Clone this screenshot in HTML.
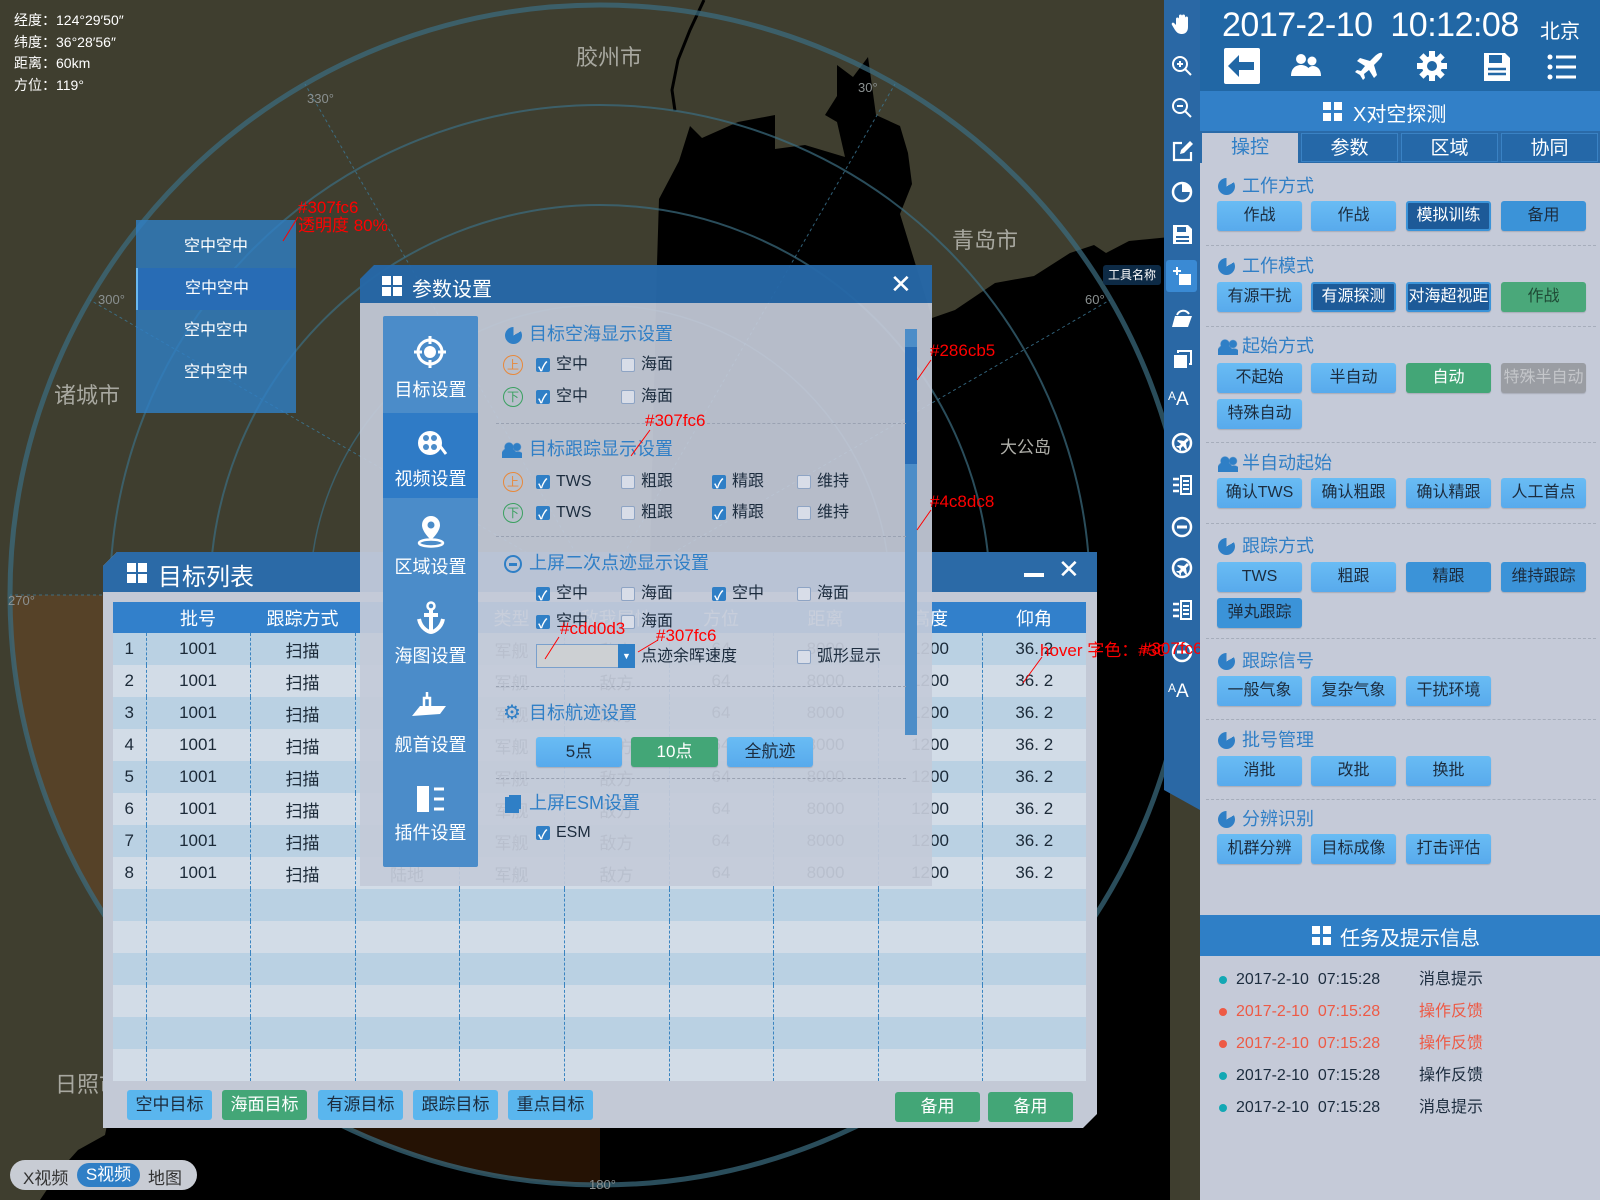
<!DOCTYPE html>
<html><head><meta charset="utf-8"><style>
*{margin:0;padding:0;box-sizing:border-box}
body{width:1600px;height:1200px;overflow:hidden;position:relative;background:#3f3e2f;font-family:"Liberation Sans","Noto Sans CJK SC",sans-serif;}
.a{position:absolute}
.info{left:14px;color:#fff;font-size:14px;line-height:14px}
.city{color:#a8a8a0;font-size:22px}
.deg{color:#8a9090;font-size:13px}
.rp{left:1200px;top:0;width:400px;height:1200px;background:#c5cad8}
.st{color:#307fc6;font-size:18px;left:1218px;height:22px;line-height:22px;padding-left:24px}
.pie:before{content:"";position:absolute;left:0;top:3px;width:17px;height:17px;border-radius:50%;background:conic-gradient(transparent 0 60deg,#2f7fc6 60deg 360deg)}
.ppl:before{content:"";position:absolute;left:0;top:4px;width:20px;height:16px;background:radial-gradient(circle at 7px 5px,#2f7fc6 4px,transparent 5px),radial-gradient(ellipse at 7px 16px,#2f7fc6 8px,transparent 9px),radial-gradient(circle at 15px 5px,#2f7fc6 3.5px,transparent 4.5px),radial-gradient(ellipse at 16px 16px,#2f7fc6 6px,transparent 7px)}
.sep{left:1206px;width:390px;border-top:1px dashed #a6adbb;height:0}
.b{position:absolute;width:85px;height:30px;line-height:30px;text-align:center;font-size:16px;color:#1c2c3e;background:linear-gradient(#69bcf4,#58aaec);border-radius:3px;box-shadow:0 1px 1px rgba(0,0,0,.15)}
.b.d{background:#1d5a98;color:#fff;border:2px solid #3b93d8;line-height:26px}
.b.g{background:#43a677;color:#fff}
.b.g2{background:#4aa87a;color:#1f4a35}
.b.m{background:#3b93d8;color:#1c2c3e}
.b.x{background:#9a9da3;color:#c4c6ca}
.ti{position:absolute;left:1171px}
.cb{position:absolute;width:14px;height:14px;border:1px solid #8ea4c4;background:#d8dde8;border-radius:2px}
.cb.c{background:#2f7fc6;border-color:#2f7fc6}
.cb.c:after{content:"✓";position:absolute;left:1px;top:-3px;color:#fff;font-size:13px;font-weight:bold}
.lbl{position:absolute;font-size:16px;color:#1c2c3e;line-height:18px}
.circ{position:absolute;width:20px;height:20px;border-radius:50%;font-size:12px;line-height:18px;text-align:center}
.dt{font-size:18px;color:#307fc6;line-height:22px;padding-left:24px}
.nav{color:#fff;font-size:18px;width:95px;text-align:center;left:383px}
.red{color:#f00;font-size:17px;line-height:18px}
table{border-collapse:collapse;table-layout:fixed}
td{height:32px;font-size:17px;color:#1c2a38;text-align:center;border-left:1px dashed #3a84c0}
td:first-child{border-left:none}
tr:nth-child(odd) td{background:#d2dce7}
tr:nth-child(even) td{background:#bad1e3}
th{height:31px;background:#3280cb;color:#fff;font-size:18px;font-weight:normal}
.lb{position:absolute;top:1090px;width:85px;height:30px;line-height:30px;text-align:center;font-size:17px;color:#1c2c3e;background:#5ab6ee;border-radius:3px}
.msg{left:1236px;font-size:16px;color:#1c2c3e;line-height:18px}
.msg b{font-weight:normal;position:absolute;left:183px;white-space:nowrap}
.dot{position:absolute;left:-17px;top:5px;width:8px;height:8px;border-radius:50%;background:#13a8b4}
.r{color:#ee5a45}.r .dot{background:#ee5a45}
</style></head><body>

<!-- map -->
<svg class="a" style="left:0;top:0" width="1200" height="1200">
<polygon fill="#000" points="675,111 702,138 738,122 775,115 775,149 805,145 845,157 837,122 825,115 837,96 837,65 853,77 868,57 876,115 900,126 908,153 912,184 900,214 932,318 955,310 995,283 1034,276 1070,253 1094,245 1106,253 1129,241 1170,237 1170,1200 40,1200 60,1170 78,1150 105,1135 110,1110 110,560 650,560 657,264 659,199 679,161 690,126"/>
<polyline fill="none" stroke="#000" stroke-width="3" points="704,0 690,30 678,60 672,90 675,111"/>
<path d="M600,595 L10,595 A590,590 0 0 0 600,1185 Z" fill="rgba(170,80,20,0.22)"/>
<g fill="none" stroke="rgba(60,110,130,0.7)">
<circle cx="600" cy="595" r="590" stroke-width="5"/>
<circle cx="600" cy="595" r="490" stroke-width="2"/>
<circle cx="600" cy="595" r="390" stroke-width="2"/>
<circle cx="600" cy="595" r="290" stroke-width="1.5"/>
</g>
<g stroke="rgba(60,120,150,0.8)" stroke-dasharray="3,3" stroke-width="1">
<line x1="600" y1="595" x2="305" y2="84"/>
<line x1="600" y1="595" x2="90" y2="300"/>
<line x1="600" y1="595" x2="895" y2="84"/>
<line x1="600" y1="595" x2="1110" y2="300"/>
<line x1="600" y1="595" x2="10" y2="595"/>
</g>
</svg>
<div class="a info" style="top:13px">经度：124°29′50″</div>
<div class="a info" style="top:35px">纬度：36°28′56″</div>
<div class="a info" style="top:56px">距离：60km</div>
<div class="a info" style="top:78px">方位：119°</div>
<div class="a city" style="left:576px;top:40px">胶州市</div>
<div class="a city" style="left:952px;top:223px">青岛市</div>
<div class="a city" style="left:54px;top:378px">诸城市</div>
<div class="a city" style="left:55px;top:1067px">日照市</div>
<div class="a" style="left:1000px;top:433px;color:#b0b0aa;font-size:17px">大公岛</div>
<div class="a deg" style="left:307px;top:91px">330°</div>
<div class="a deg" style="left:98px;top:292px">300°</div>
<div class="a deg" style="left:858px;top:80px">30°</div>
<div class="a deg" style="left:1085px;top:292px">60°</div>
<div class="a deg" style="left:8px;top:593px">270°</div>
<div class="a deg" style="left:589px;top:1177px">180°</div>

<!-- popup list -->
<div class="a" style="left:136px;top:220px;width:160px;height:193px;background:rgba(48,127,198,0.8)">
<div style="height:42px;line-height:42px;margin-top:6px;text-align:center;color:#fff;font-size:16px">空中空中</div>
<div style="height:42px;line-height:42px;text-align:center;color:#fff;font-size:16px;background:#286cb5;border-left:2px solid #6ab8f0">空中空中</div>
<div style="height:42px;line-height:42px;text-align:center;color:#fff;font-size:16px">空中空中</div>
<div style="height:42px;line-height:42px;text-align:center;color:#fff;font-size:16px">空中空中</div>
</div>
<div class="a red" style="left:298px;top:199px">#307fc6<br>透明度 80%</div>
<svg class="a" style="left:280px;top:215px" width="20" height="30"><line x1="18" y1="2" x2="3" y2="26" stroke="#f00"/></svg>

<!-- target list window -->
<div class="a" style="left:103px;top:552px;width:994px;height:576px;background:#c3c9d6;clip-path:polygon(14px 0,100% 0,100% calc(100% - 14px),calc(100% - 14px) 100%,0 100%,0 14px)">
<div style="height:40px;background:#2b6aa7"></div>
</div>
<div class="a" style="left:127px;top:563px;width:20px;height:20px;background:linear-gradient(#fff,#fff) 0 0/9px 9px no-repeat,linear-gradient(#fff,#fff) 11px 0/9px 9px no-repeat,linear-gradient(#fff,#fff) 0 11px/9px 9px no-repeat,linear-gradient(#fff,#fff) 11px 11px/9px 9px no-repeat"></div>
<div class="a" style="left:158px;top:557px;color:#fff;font-size:24px">目标列表</div>
<div class="a" style="left:1024px;top:573px;width:20px;height:4px;background:#fff"></div>
<div class="a" style="left:1058px;top:556px;color:#fff;font-size:26px;line-height:26px">✕</div>
<table class="a" style="left:113px;top:602px;width:973px">
<colgroup><col style="width:33px"><col style="width:104px"><col style="width:105px"><col style="width:104px"><col style="width:105px"><col style="width:105px"><col style="width:104px"><col style="width:105px"><col style="width:104px"><col style="width:104px"></colgroup>
<tr><th></th><th>批号</th><th>跟踪方式</th><th>航迹</th><th>类型</th><th>敌我属性</th><th>方位</th><th>距离</th><th>高度</th><th>仰角</th></tr>
<tr><td>1</td><td>1001</td><td>扫描</td><td>陆地</td><td>军舰</td><td>敌方</td><td>64</td><td>8000</td><td>1200</td><td>36. 2</td></tr>
<tr><td>2</td><td>1001</td><td>扫描</td><td>陆地</td><td>军舰</td><td>敌方</td><td>64</td><td>8000</td><td>1200</td><td>36. 2</td></tr>
<tr><td>3</td><td>1001</td><td>扫描</td><td>陆地</td><td>军舰</td><td>敌方</td><td>64</td><td>8000</td><td>1200</td><td>36. 2</td></tr>
<tr><td>4</td><td>1001</td><td>扫描</td><td>陆地</td><td>军舰</td><td>敌方</td><td>64</td><td>8000</td><td>1200</td><td>36. 2</td></tr>
<tr><td>5</td><td>1001</td><td>扫描</td><td>陆地</td><td>军舰</td><td>敌方</td><td>64</td><td>8000</td><td>1200</td><td>36. 2</td></tr>
<tr><td>6</td><td>1001</td><td>扫描</td><td>陆地</td><td>军舰</td><td>敌方</td><td>64</td><td>8000</td><td>1200</td><td>36. 2</td></tr>
<tr><td>7</td><td>1001</td><td>扫描</td><td>陆地</td><td>军舰</td><td>敌方</td><td>64</td><td>8000</td><td>1200</td><td>36. 2</td></tr>
<tr><td>8</td><td>1001</td><td>扫描</td><td>陆地</td><td>军舰</td><td>敌方</td><td>64</td><td>8000</td><td>1200</td><td>36. 2</td></tr>
<tr><td></td><td></td><td></td><td></td><td></td><td></td><td></td><td></td><td></td><td></td></tr>
<tr><td></td><td></td><td></td><td></td><td></td><td></td><td></td><td></td><td></td><td></td></tr>
<tr><td></td><td></td><td></td><td></td><td></td><td></td><td></td><td></td><td></td><td></td></tr>
<tr><td></td><td></td><td></td><td></td><td></td><td></td><td></td><td></td><td></td><td></td></tr>
<tr><td></td><td></td><td></td><td></td><td></td><td></td><td></td><td></td><td></td><td></td></tr>
<tr><td></td><td></td><td></td><td></td><td></td><td></td><td></td><td></td><td></td><td></td></tr>
</table>
<div class="lb" style="left:127px">空中目标</div>
<div class="lb" style="left:222px;background:#43a677;color:#fff">海面目标</div>
<div class="lb" style="left:318px">有源目标</div>
<div class="lb" style="left:413px">跟踪目标</div>
<div class="lb" style="left:508px">重点目标</div>
<div class="lb" style="left:895px;top:1092px;background:#43a677;color:#fff">备用</div>
<div class="lb" style="left:988px;top:1092px;background:#43a677;color:#fff">备用</div>
<div class="a red" style="left:1040px;top:642px">hover 字色：#307fc6</div>
<svg class="a" style="left:1020px;top:655px" width="25" height="30"><line x1="22" y1="2" x2="3" y2="28" stroke="#f00"/></svg>

<!-- param dialog -->
<div class="a" style="left:360px;top:265px;width:572px;height:621px;clip-path:polygon(14px 0,100% 0,100% 100%,0 100%,0 14px)">
<div style="height:38px;background:rgba(38,104,168,0.96)"></div>
<div style="height:583px;background:rgba(196,202,216,0.93)"></div>
</div>
<div class="a" style="left:382px;top:276px;width:20px;height:20px;background:linear-gradient(#fff,#fff) 0 0/9px 9px no-repeat,linear-gradient(#fff,#fff) 11px 0/9px 9px no-repeat,linear-gradient(#fff,#fff) 0 11px/9px 9px no-repeat,linear-gradient(#fff,#fff) 11px 11px/9px 9px no-repeat"></div>
<div class="a" style="left:412px;top:273px;color:#fff;font-size:20px">参数设置</div>
<div class="a" style="left:890px;top:271px;color:#fff;font-size:26px;line-height:26px">✕</div>
<div class="a" style="left:383px;top:316px;width:95px;height:551px;background:#4b8cc9;border-radius:2px"></div>
<div class="a" style="left:383px;top:413px;width:95px;height:85px;background:#2f7bc6"></div>
<svg class="a" style="left:412px;top:334px" width="36" height="36"><circle cx="18" cy="18" r="12" fill="none" stroke="#fff" stroke-width="3"/><circle cx="18" cy="18" r="6" fill="#fff"/><path d="M18 2v8M18 26v8M2 18h8M26 18h8" stroke="#fff" stroke-width="3"/></svg>
<svg class="a" style="left:414px;top:428px" width="34" height="30"><circle cx="16" cy="15" r="12" fill="#fff"/><circle cx="12" cy="10" r="3" fill="#4b8cc9"/><circle cx="20" cy="10" r="3" fill="#4b8cc9"/><circle cx="12" cy="19" r="3" fill="#4b8cc9"/><circle cx="20" cy="19" r="3" fill="#4b8cc9"/><path d="M26 18l6 8" stroke="#fff" stroke-width="3"/></svg>
<svg class="a" style="left:416px;top:514px" width="30" height="34"><path d="M15 2a9 9 0 0 1 9 9c0 7-9 15-9 15s-9-8-9-15a9 9 0 0 1 9-9z" fill="#fff"/><circle cx="15" cy="11" r="3.5" fill="#4b8cc9"/><ellipse cx="15" cy="29" rx="12" ry="3.5" fill="none" stroke="#fff" stroke-width="2.5"/></svg>
<svg class="a" style="left:416px;top:601px" width="30" height="34"><circle cx="15" cy="5" r="3.5" fill="none" stroke="#fff" stroke-width="2.5"/><path d="M15 8v22M8 14h14M3 18c2 10 10 13 12 13s10-3 12-13" fill="none" stroke="#fff" stroke-width="4"/></svg>
<svg class="a" style="left:410px;top:690px" width="40" height="32"><path d="M2 26l8-10h26l-6 8z" fill="#fff"/><path d="M14 16v-8h6v8M17 8v-6" stroke="#fff" stroke-width="2.5" fill="none"/></svg>
<svg class="a" style="left:416px;top:784px" width="34" height="30"><rect x="1" y="2" width="12" height="26" fill="#fff"/><path d="M18 5h10M18 15h10M18 25h10" stroke="#fff" stroke-width="3"/></svg>
<div class="a nav" style="top:376px">目标设置</div>
<div class="a nav" style="top:465px">视频设置</div>
<div class="a nav" style="top:553px">区域设置</div>
<div class="a nav" style="top:642px">海图设置</div>
<div class="a nav" style="top:731px">舰首设置</div>
<div class="a nav" style="top:819px">插件设置</div>

<div class="a" style="left:905px;top:329px;width:12px;height:406px;background:#4c8dc8"></div>
<div class="a" style="left:905px;top:347px;width:12px;height:117px;background:#286cb5"></div>

<div class="a dt" style="left:505px;top:323px">目标空海显示设置</div>
<div class="a" style="left:505px;top:327px;width:17px;height:17px;border-radius:50%;background:conic-gradient(transparent 0 60deg,#2f7fc6 60deg 360deg)"></div>
<div class="circ" style="left:503px;top:355px;border:1px solid #e8883a;color:#e8883a">上</div>
<div class="cb c" style="left:536px;top:358px"></div><div class="lbl" style="left:556px;top:356px">空中</div>
<div class="cb" style="left:621px;top:358px"></div><div class="lbl" style="left:641px;top:356px">海面</div>
<div class="circ" style="left:503px;top:387px;border:1px solid #3aa060;color:#3aa060">下</div>
<div class="cb c" style="left:536px;top:390px"></div><div class="lbl" style="left:556px;top:388px">空中</div>
<div class="cb" style="left:621px;top:390px"></div><div class="lbl" style="left:641px;top:388px">海面</div>
<div class="a" style="left:496px;top:423px;width:410px;border-top:1px dashed #9aa2b2"></div>

<div class="a dt" style="left:505px;top:438px">目标跟踪显示设置</div>
<div class="a" style="left:502px;top:442px;width:20px;height:16px;background:radial-gradient(circle at 7px 5px,#2f7fc6 4px,transparent 5px),radial-gradient(ellipse at 7px 16px,#2f7fc6 8px,transparent 9px),radial-gradient(circle at 15px 5px,#2f7fc6 3.5px,transparent 4.5px),radial-gradient(ellipse at 16px 16px,#2f7fc6 6px,transparent 7px)"></div>
<div class="circ" style="left:503px;top:472px;border:1px solid #e8883a;color:#e8883a">上</div>
<div class="cb c" style="left:536px;top:475px"></div><div class="lbl" style="left:556px;top:473px">TWS</div>
<div class="cb" style="left:621px;top:475px"></div><div class="lbl" style="left:641px;top:473px">粗跟</div>
<div class="cb c" style="left:712px;top:475px"></div><div class="lbl" style="left:732px;top:473px">精跟</div>
<div class="cb" style="left:797px;top:475px"></div><div class="lbl" style="left:817px;top:473px">维持</div>
<div class="circ" style="left:503px;top:503px;border:1px solid #3aa060;color:#3aa060">下</div>
<div class="cb c" style="left:536px;top:506px"></div><div class="lbl" style="left:556px;top:504px">TWS</div>
<div class="cb" style="left:621px;top:506px"></div><div class="lbl" style="left:641px;top:504px">粗跟</div>
<div class="cb c" style="left:712px;top:506px"></div><div class="lbl" style="left:732px;top:504px">精跟</div>
<div class="cb" style="left:797px;top:506px"></div><div class="lbl" style="left:817px;top:504px">维持</div>
<div class="a" style="left:496px;top:536px;width:410px;border-top:1px dashed #9aa2b2"></div>

<div class="a dt" style="left:505px;top:552px">上屏二次点迹显示设置</div>
<div class="a" style="left:504px;top:555px;width:18px;height:18px;border-radius:50%;border:2px solid #2f7fc6;background:linear-gradient(#2f7fc6,#2f7fc6) center/8px 3px no-repeat"></div>
<div class="cb c" style="left:536px;top:587px"></div><div class="lbl" style="left:556px;top:585px">空中</div>
<div class="cb" style="left:621px;top:587px"></div><div class="lbl" style="left:641px;top:585px">海面</div>
<div class="cb c" style="left:712px;top:587px"></div><div class="lbl" style="left:732px;top:585px">空中</div>
<div class="cb" style="left:797px;top:587px"></div><div class="lbl" style="left:817px;top:585px">海面</div>
<div class="cb c" style="left:536px;top:615px"></div><div class="lbl" style="left:556px;top:613px">空中</div>
<div class="cb" style="left:621px;top:615px"></div><div class="lbl" style="left:641px;top:613px">海面</div>
<div class="a" style="left:536px;top:644px;width:99px;height:24px;background:#cdd0d3;border:1px solid #7aa0cc"></div>
<div class="a" style="left:618px;top:644px;width:17px;height:24px;background:#2f7fc6;color:#fff;font-size:9px;text-align:center;line-height:24px">▼</div>
<div class="lbl" style="left:641px;top:648px">点迹余晖速度</div>
<div class="cb" style="left:797px;top:650px"></div><div class="lbl" style="left:817px;top:648px">弧形显示</div>
<div class="a" style="left:496px;top:686px;width:410px;border-top:1px dashed #9aa2b2"></div>

<div class="a dt" style="left:505px;top:702px">目标航迹设置</div>
<div class="a" style="left:503px;top:703px;color:#2f7fc6;font-size:20px;line-height:20px">⚙</div>
<div class="b" style="left:536px;top:737px;width:86px;font-size:17px">5点</div>
<div class="b g" style="left:631px;top:737px;width:87px;font-size:17px">10点</div>
<div class="b" style="left:727px;top:737px;width:86px;font-size:17px">全航迹</div>
<div class="a" style="left:496px;top:778px;width:410px;border-top:1px dashed #9aa2b2"></div>

<div class="a dt" style="left:505px;top:792px">上屏ESM设置</div>
<div class="a" style="left:505px;top:797px;width:14px;height:16px;background:#2f7fc6;box-shadow:3px -3px 0 -1px #2f7fc6"></div>
<div class="cb c" style="left:536px;top:826px"></div><div class="lbl" style="left:556px;top:824px">ESM</div>

<div class="a red" style="left:645px;top:412px">#307fc6</div>
<svg class="a" style="left:628px;top:428px" width="25" height="30"><line x1="22" y1="2" x2="3" y2="28" stroke="#f00"/></svg>
<div class="a red" style="left:930px;top:342px">#286cb5</div>
<svg class="a" style="left:914px;top:358px" width="20" height="24"><line x1="17" y1="2" x2="3" y2="22" stroke="#f00"/></svg>
<div class="a red" style="left:930px;top:493px">#4c8dc8</div>
<svg class="a" style="left:914px;top:508px" width="20" height="24"><line x1="17" y1="2" x2="3" y2="22" stroke="#f00"/></svg>
<div class="a red" style="left:560px;top:620px">#cdd0d3</div>
<svg class="a" style="left:542px;top:635px" width="20" height="26"><line x1="17" y1="2" x2="3" y2="24" stroke="#f00"/></svg>
<div class="a red" style="left:656px;top:627px">#307fc6</div>
<svg class="a" style="left:636px;top:638px" width="24" height="18"><line x1="22" y1="2" x2="2" y2="14" stroke="#f00"/></svg>

<!-- toolbar strip -->
<div class="a" style="left:1164px;top:0;width:36px;height:810px;background:#2a68a5;clip-path:polygon(0 0,100% 0,100% 100%,0 790px)"></div>
<div class="a" style="left:1166px;top:260px;width:31px;height:32px;background:#3a8ad4;border-radius:3px"></div>
<div class="a" style="left:1103px;top:265px;width:58px;height:20px;background:#0d2a45;border-radius:3px;color:#fff;font-size:12px;line-height:20px;text-align:center">工具名称</div>
<svg class="ti" style="top:13px" width="22" height="22"><path d="M5 12V6a1.5 1.5 0 0 1 3 0v5V3a1.5 1.5 0 0 1 3 0v8V3a1.5 1.5 0 0 1 3 0v8V5a1.5 1.5 0 0 1 3 0v9c0 5-3 7-6 7s-5-1-7-4l-3-5c-1-2 1-3 2-2z" fill="#fff"/></svg>
<svg class="ti" style="top:55px" width="22" height="22" fill="none" stroke="#fff" stroke-width="2"><circle cx="9" cy="9" r="7"/><path d="M14 14l6 6M6 9h6M9 6v6"/></svg>
<svg class="ti" style="top:97px" width="22" height="22" fill="none" stroke="#fff" stroke-width="2"><circle cx="9" cy="9" r="7"/><path d="M14 14l6 6M6 9h6"/></svg>
<svg class="ti" style="top:140px" width="22" height="22" fill="none" stroke="#fff" stroke-width="2.2"><path d="M11 3H3v17h17v-8"/><path d="M9 14l1-4 9-9 3 3-9 9z" fill="#fff" stroke="none"/></svg>
<svg class="ti" style="top:181px" width="22" height="22"><circle cx="11" cy="11" r="9" fill="none" stroke="#fff" stroke-width="2.5"/><path d="M11 11V2a9 9 0 0 1 9 9z" fill="#fff"/></svg>
<svg class="ti" style="top:223px" width="22" height="22"><path d="M2 2h15l4 4v15H2z" fill="#fff"/><rect x="6" y="4" width="9" height="5" fill="#2a68a5"/><path d="M5 14h13M5 18h13" stroke="#2a68a5" stroke-width="2"/></svg>
<svg class="ti" style="top:265px" width="22" height="22"><path d="M2 6h8M6 2v8" stroke="#fff" stroke-width="2"/><rect x="8" y="9" width="12" height="11" fill="#fff"/></svg>
<svg class="ti" style="top:307px" width="22" height="22"><path d="M1 20l3-11h17l-4 11z" fill="#fff"/><path d="M6 8c2-5 9-6 12-1" fill="none" stroke="#fff" stroke-width="2"/></svg>
<svg class="ti" style="top:348px" width="22" height="22"><rect x="3" y="7" width="13" height="13" fill="#fff"/><path d="M7 5V3h13v13h-2" fill="none" stroke="#fff" stroke-width="2"/></svg>
<div class="a" style="left:1168px;top:389px;color:#fff;font-size:19px"><span style="font-size:12px;vertical-align:5px">A</span>A</div>
<svg class="ti" style="top:432px" width="22" height="22"><circle cx="11" cy="11" r="9" fill="none" stroke="#fff" stroke-width="2.5"/><path d="M16 6l-3 3-6-1-1 1 4 3-2 2-2 0-1 1 3 1 1 3 1-1v-2l2-2 3 4 1-1-1-6 3-3z" fill="#fff"/></svg>
<svg class="ti" style="top:474px" width="22" height="22"><path d="M2 5h6M2 11h6M2 17h6" stroke="#fff" stroke-width="2.5"/><rect x="10" y="2" width="10" height="18" fill="none" stroke="#fff" stroke-width="2"/><path d="M12 7h6M12 11h6M12 15h6" stroke="#fff" stroke-width="2"/></svg>
<svg class="ti" style="top:516px" width="22" height="22"><circle cx="11" cy="11" r="9" fill="none" stroke="#fff" stroke-width="2.5"/><path d="M6 11h10" stroke="#fff" stroke-width="3"/></svg>
<svg class="ti" style="top:557px" width="22" height="22"><circle cx="11" cy="11" r="9" fill="none" stroke="#fff" stroke-width="2.5"/><path d="M16 6l-3 3-6-1-1 1 4 3-2 2-2 0-1 1 3 1 1 3 1-1v-2l2-2 3 4 1-1-1-6 3-3z" fill="#fff"/></svg>
<svg class="ti" style="top:599px" width="22" height="22"><path d="M2 5h6M2 11h6M2 17h6" stroke="#fff" stroke-width="2.5"/><rect x="10" y="2" width="10" height="18" fill="none" stroke="#fff" stroke-width="2"/><path d="M12 7h6M12 11h6M12 15h6" stroke="#fff" stroke-width="2"/></svg>
<svg class="ti" style="top:641px" width="22" height="22"><circle cx="11" cy="11" r="9" fill="none" stroke="#fff" stroke-width="2.5"/><path d="M6 11h10" stroke="#fff" stroke-width="3"/></svg>
<div class="a" style="left:1168px;top:681px;color:#fff;font-size:19px"><span style="font-size:12px;vertical-align:5px">A</span>A</div>
<div class="a red" style="left:1142px;top:640px">#307fc6</div>

<!-- right panel -->
<div class="a rp"></div>
<div class="a" style="left:1200px;top:0;width:400px;height:91px;background:#2167a5"></div>
<div class="a" style="left:1222px;top:6px;color:#fff;font-size:34px;white-space:nowrap;letter-spacing:-0.5px">2017-2-10&nbsp;&nbsp;10:12:08</div>
<div class="a" style="left:1540px;top:15px;color:#fff;font-size:20px">北京</div>
<div class="a" style="left:1224px;top:48px;width:36px;height:36px;background:#fff;border-radius:2px"></div>
<svg class="a" style="left:1224px;top:48px" width="36" height="36"><path d="M4 18l11-11v7h15v8h-15v7z" fill="#2167a5"/></svg>
<svg class="a" style="left:1290px;top:52px" width="32" height="28"><circle cx="11" cy="7" r="5" fill="#fff"/><circle cx="22" cy="9" r="4.5" fill="#fff"/><path d="M1 24c0-8 5-11 10-11s10 3 10 11z" fill="#fff"/><path d="M16 24c0-7 3-10 7-10s8 3 8 10z" fill="#fff"/></svg>
<svg class="a" style="left:1354px;top:50px" width="32" height="32"><path d="M28 3c-2-1-5 1-8 4l-4 4-10-3-3 3 8 5-4 5-4-1-2 2 5 3 3 5 2-2-1-4 5-4 5 8 3-3-3-10 4-4c3-3 5-6 4-8z" fill="#fff"/></svg>
<svg class="a" style="left:1416px;top:50px" width="32" height="32"><g fill="#fff"><circle cx="16" cy="16" r="10"/><rect x="13" y="1" width="6" height="30"/><rect x="1" y="13" width="30" height="6"/><rect x="13" y="1" width="6" height="30" transform="rotate(45 16 16)"/><rect x="13" y="1" width="6" height="30" transform="rotate(-45 16 16)"/></g><circle cx="16" cy="16" r="5" fill="#2167a5"/></svg>
<svg class="a" style="left:1483px;top:52px" width="28" height="30"><path d="M1 1h21l5 5v23h-26z" fill="#fff"/><rect x="6" y="3" width="13" height="8" fill="#2167a5"/><path d="M5 17h18M5 22h18" stroke="#2167a5" stroke-width="2.5"/></svg>
<svg class="a" style="left:1547px;top:54px" width="30" height="26"><path d="M9 3h20M9 13h20M9 23h20" stroke="#fff" stroke-width="3"/><circle cx="3" cy="3" r="2.5" fill="#fff"/><circle cx="3" cy="13" r="2.5" fill="#fff"/><circle cx="3" cy="23" r="2.5" fill="#fff"/></svg>

<div class="a" style="left:1200px;top:91px;width:400px;height:40px;background:#3280c8"></div>
<div class="a" style="left:1323px;top:102px;width:19px;height:19px;background:linear-gradient(#fff,#fff) 0 0/8px 8px no-repeat,linear-gradient(#fff,#fff) 11px 0/8px 8px no-repeat,linear-gradient(#fff,#fff) 0 11px/8px 8px no-repeat,linear-gradient(#fff,#fff) 11px 11px/8px 8px no-repeat"></div>
<div class="a" style="left:1353px;top:98px;color:#fff;font-size:20px">X对空探测</div>
<div class="a" style="left:1200px;top:131px;width:400px;height:32px;background:#2a6aa8"></div>
<div class="a" style="left:1202px;top:133px;width:96px;height:30px;background:#c5cad8;color:#307fc6;font-size:19px;text-align:center;line-height:30px">操控</div>
<div class="a" style="left:1301px;top:133px;width:97px;height:29px;background:#2568a8;color:#fff;font-size:19px;text-align:center;line-height:29px;border:1px solid #3a82c4">参数</div>
<div class="a" style="left:1401px;top:133px;width:97px;height:29px;background:#2568a8;color:#fff;font-size:19px;text-align:center;line-height:29px;border:1px solid #3a82c4">区域</div>
<div class="a" style="left:1501px;top:133px;width:97px;height:29px;background:#2568a8;color:#fff;font-size:19px;text-align:center;line-height:29px;border:1px solid #3a82c4">协同</div>

<div class="a st pie" style="top:175px">工作方式</div>
<div class="b" style="left:1217px;top:201px">作战</div><div class="b" style="left:1311px;top:201px">作战</div><div class="b d" style="left:1406px;top:201px">模拟训练</div><div class="b m" style="left:1501px;top:201px">备用</div>
<div class="a sep" style="top:245px"></div>
<div class="a st pie" style="top:255px">工作模式</div>
<div class="b" style="left:1217px;top:282px">有源干扰</div><div class="b d" style="left:1311px;top:282px">有源探测</div><div class="b d" style="left:1406px;top:282px">对海超视距</div><div class="b g2" style="left:1501px;top:282px">作战</div>
<div class="a sep" style="top:326px"></div>
<div class="a st ppl" style="top:335px">起始方式</div>
<div class="b" style="left:1217px;top:363px">不起始</div><div class="b" style="left:1311px;top:363px">半自动</div><div class="b g" style="left:1406px;top:363px">自动</div><div class="b x" style="left:1501px;top:363px">特殊半自动</div>
<div class="b" style="left:1217px;top:399px">特殊自动</div>
<div class="a sep" style="top:442px"></div>
<div class="a st ppl" style="top:452px">半自动起始</div>
<div class="b" style="left:1217px;top:478px">确认TWS</div><div class="b" style="left:1311px;top:478px">确认粗跟</div><div class="b" style="left:1406px;top:478px">确认精跟</div><div class="b" style="left:1501px;top:478px">人工首点</div>
<div class="a sep" style="top:523px"></div>
<div class="a st pie" style="top:535px">跟踪方式</div>
<div class="b" style="left:1217px;top:562px">TWS</div><div class="b" style="left:1311px;top:562px">粗跟</div><div class="b m" style="left:1406px;top:562px">精跟</div><div class="b m" style="left:1501px;top:562px">维持跟踪</div>
<div class="b m" style="left:1217px;top:598px">弹丸跟踪</div>
<div class="a sep" style="top:638px"></div>
<div class="a st pie" style="top:650px">跟踪信号</div>
<div class="b" style="left:1217px;top:676px">一般气象</div><div class="b" style="left:1311px;top:676px">复杂气象</div><div class="b" style="left:1406px;top:676px">干扰环境</div>
<div class="a sep" style="top:719px"></div>
<div class="a st pie" style="top:729px">批号管理</div>
<div class="b" style="left:1217px;top:756px">消批</div><div class="b" style="left:1311px;top:756px">改批</div><div class="b" style="left:1406px;top:756px">换批</div>
<div class="a sep" style="top:799px"></div>
<div class="a st pie" style="top:808px">分辨识别</div>
<div class="b" style="left:1217px;top:834px">机群分辨</div><div class="b" style="left:1311px;top:834px">目标成像</div><div class="b" style="left:1406px;top:834px">打击评估</div>

<div class="a" style="left:1200px;top:915px;width:400px;height:41px;background:#2f7fc6"></div>
<div class="a" style="left:1312px;top:926px;width:19px;height:19px;background:linear-gradient(#fff,#fff) 0 0/8px 8px no-repeat,linear-gradient(#fff,#fff) 11px 0/8px 8px no-repeat,linear-gradient(#fff,#fff) 0 11px/8px 8px no-repeat,linear-gradient(#fff,#fff) 11px 11px/8px 8px no-repeat"></div>
<div class="a" style="left:1340px;top:922px;color:#fff;font-size:20px">任务及提示信息</div>
<div class="a msg" style="top:971px"><span class="dot"></span>2017-2-10&nbsp;&nbsp;07:15:28<b>消息提示</b></div>
<div class="a msg r" style="top:1003px"><span class="dot"></span>2017-2-10&nbsp;&nbsp;07:15:28<b>操作反馈</b></div>
<div class="a msg r" style="top:1035px"><span class="dot"></span>2017-2-10&nbsp;&nbsp;07:15:28<b>操作反馈</b></div>
<div class="a msg" style="top:1067px"><span class="dot"></span>2017-2-10&nbsp;&nbsp;07:15:28<b>操作反馈</b></div>
<div class="a msg" style="top:1099px"><span class="dot"></span>2017-2-10&nbsp;&nbsp;07:15:28<b>消息提示</b></div>

<!-- bottom pill -->
<div class="a" style="left:10px;top:1160px;width:187px;height:30px;background:#c8ccd4;border-radius:15px"></div>
<div class="a" style="left:23px;top:1164px;font-size:17px;color:#333">X视频</div>
<div class="a" style="left:77px;top:1163px;width:63px;height:24px;background:#2f7fc6;border-radius:12px;color:#fff;font-size:17px;text-align:center;line-height:24px">S视频</div>
<div class="a" style="left:148px;top:1164px;font-size:17px;color:#333">地图</div>
</body></html>
